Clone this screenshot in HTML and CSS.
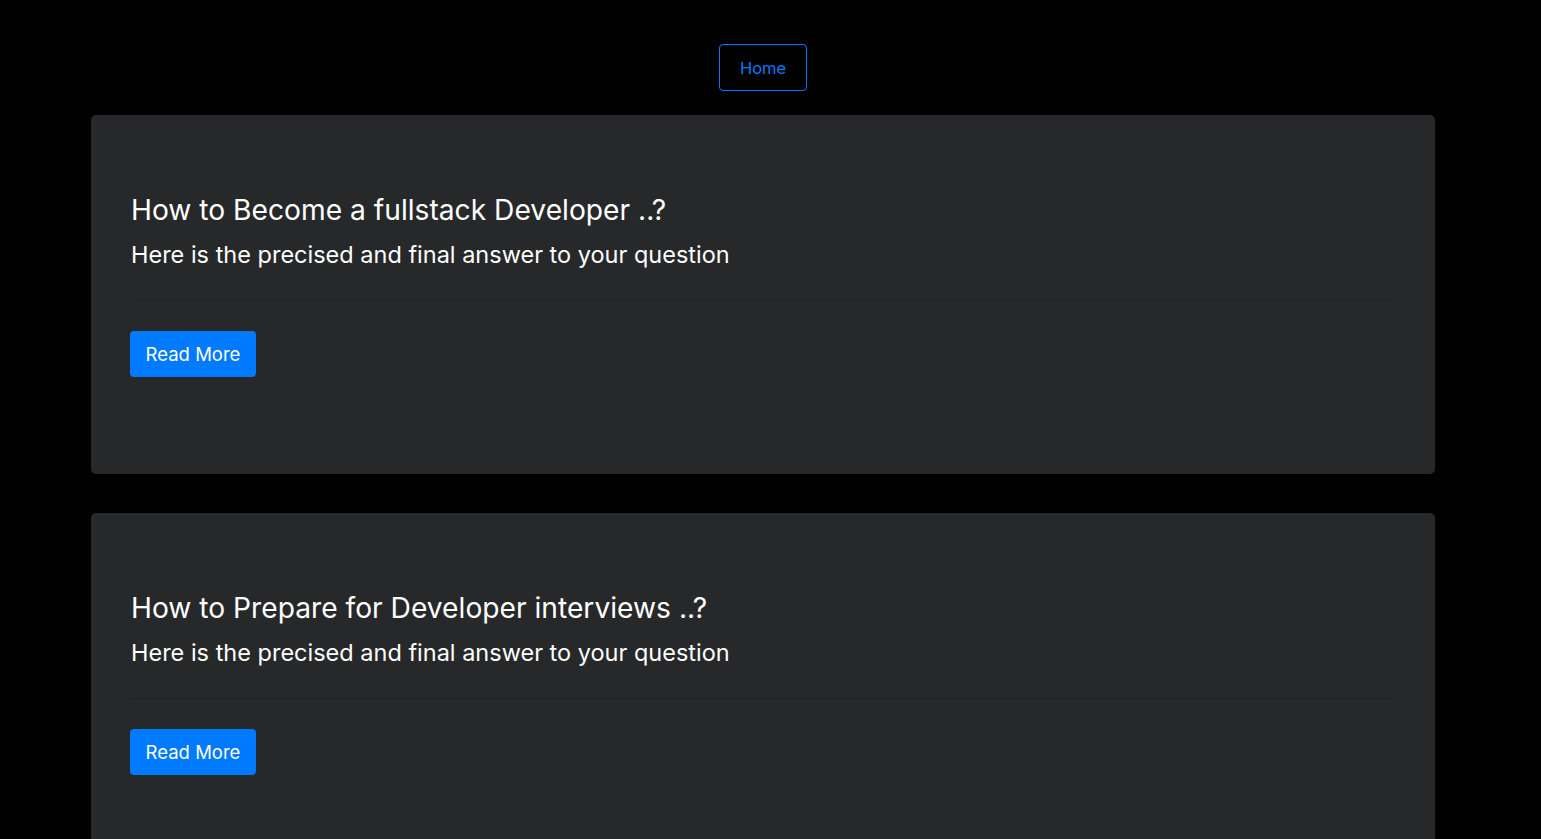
FILE: index.html
```html
<!DOCTYPE html>
<html lang="en">
<head>
<meta charset="utf-8">
<title>Blog</title>
<link rel="stylesheet" href="styles.css">
</head>
<body>
<div class="page">
  <nav class="nav">
    <a class="btn-home" href="#">Home</a>
  </nav>
  <main class="list">
    <section class="card">
      <h3 class="title">How to Become a fullstack Developer ..?</h3>
      <p class="lead">Here is the precised and final answer to your question</p>
      <hr class="rule">
      <a class="btn-read" href="#">Read More</a>
    </section>
    <section class="card">
      <h3 class="title">How to Prepare for Developer interviews ..?</h3>
      <p class="lead">Here is the precised and final answer to your question</p>
      <hr class="rule">
      <a class="btn-read" href="#">Read More</a>
    </section>
  </main>
</div>
</body>
</html>
```

FILE: styles.css
```css
html, body {
  margin: 0;
  padding: 0;
  background: #000;
}
body {
  font-family: Inter, "Noto Sans", sans-serif;
  color: #fff;
}
.page {
  width: 1526px;
  display: flex;
  flex-direction: column;
  align-items: center;
}
.nav {
  padding-top: 44px;
  padding-bottom: 24px;
  display: flex;
  justify-content: center;
}
.btn-home {
  display: flex;
  align-items: center;
  justify-content: center;
  width: 86px;
  height: 45px;
  border: 1px solid #007bff;
  border-radius: 4px;
  color: #007bff;
  font-size: 16.5px;
  text-decoration: none;
}
.list {
  display: flex;
  flex-direction: column;
  gap: 39px;
  width: 1344px;
}
.card {
  background: #27282a;
  border-radius: 5px;
  padding: 79px 39px 97px 39px;
}
.title {
  margin: 0 0 9px 1px;
  font-size: 28.2px;
  font-weight: 400;
  line-height: 1.2;
}
.lead {
  margin: 0 0 0 1px;
  font-size: 23.5px;
  line-height: 1.5;
}
.rule {
  margin: 28px 0 30px 0;
  border: 0;
  border-top: 1px solid rgba(0, 0, 0, 0.15);
}
.btn-read {
  display: inline-flex;
  align-items: center;
  justify-content: center;
  width: 126px;
  height: 46px;
  background: #007bff;
  color: #fff;
  border-radius: 4px;
  font-size: 18.5px;
  text-decoration: none;
}
```
